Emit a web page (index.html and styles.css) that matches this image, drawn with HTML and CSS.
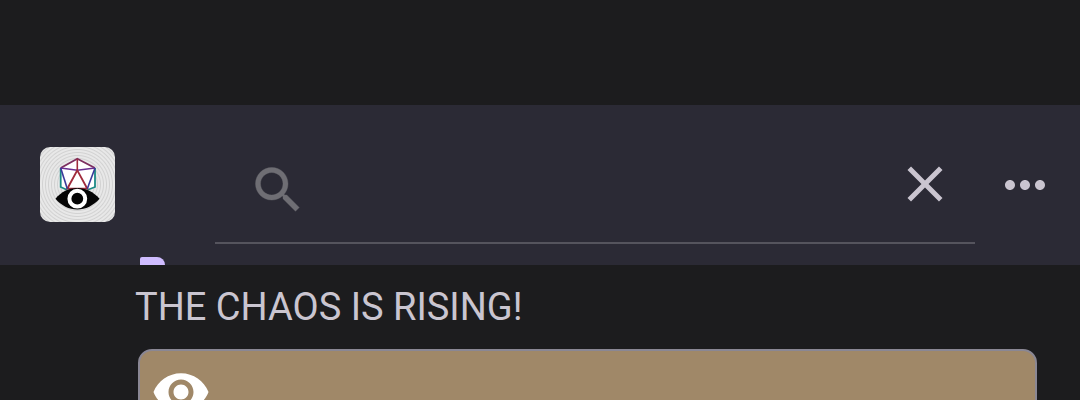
FILE: index.html
```html
<!DOCTYPE html>
<html lang="en">
<head>
    <meta charset="UTF-8">
    <meta name="viewport" content="width=device-width, initial-scale=1.0">
    <title>The Chaos Is Rising</title>
    <link rel="stylesheet" href="styles.css">
</head>
<body>
    <div class="status-bar"></div>
    <header class="app-bar">
        <div class="logo">
            <svg viewBox="0 0 75 75" width="75" height="75" fill="none">
                <polygon points="37.3,11.7 55,21 55,40 37.3,50 20.7,40 20.7,21" fill="#fff"/>
                <polyline points="20.7,21 37.3,11.7 55,21" stroke="#7d2f5f" stroke-width="1.8"/>
                <polyline points="20.7,21 20.7,40 27.3,43" stroke="#1b8a86" stroke-width="1.8"/>
                <polyline points="55,21 55,40 47.3,43" stroke="#1b8a86" stroke-width="1.8"/>
                <polyline points="20.7,21 37.3,23.3 55,21" stroke="#6a2f90" stroke-width="1.6"/>
                <line x1="37.3" y1="11.7" x2="37.3" y2="23.3" stroke="#a02c3c" stroke-width="1.6"/>
                <polygon points="37.3,23.3 27.3,41.7 47.3,41.7" stroke="#a02c3c" stroke-width="1.8"/>
                <line x1="20.7" y1="21" x2="27.3" y2="41.7" stroke="#3b3a9a" stroke-width="1.6"/>
                <line x1="55" y1="21" x2="47.3" y2="41.7" stroke="#3b3a9a" stroke-width="1.6"/>
                <path d="M15.5 51.7C21 45 29 41 37.3 41S53.6 45 59.5 51.7C53.6 58.4 45.6 62.5 37.3 62.5S21 58.4 15.5 51.7Z" fill="#050505"/>
                <circle cx="37.3" cy="51.7" r="7.9" stroke="#fff" stroke-width="4"/>
            </svg>
        </div>
        <div class="search">
            <svg class="icon search-icon" viewBox="0 0 24 24" width="60" height="60">
                <path d="M15.5 14h-.79l-.28-.27C15.41 12.59 16 11.11 16 9.5 16 5.91 13.09 3 9.5 3S3 5.91 3 9.5 5.91 16 9.5 16c1.61 0 3.09-.59 4.23-1.57l.27.28v.79l5 4.99L20.49 19l-4.99-5zm-6 0C7.01 14 5 11.99 5 9.5S7.01 5 9.5 5 14 7.01 14 9.5 11.99 14 9.5 14z"/>
            </svg>
            <input class="search-input" type="text" aria-label="Search">
            <svg class="icon" viewBox="0 0 24 24" width="60" height="60">
                <path d="M19 6.41L17.59 5 12 10.59 6.41 5 5 6.41 10.59 12 5 17.59 6.41 19 12 13.41 17.59 19 19 17.59 13.41 12z"/>
            </svg>
        </div>
        <svg class="icon more" viewBox="0 0 24 24" width="60" height="60">
            <path d="M6 10c-1.1 0-2 .9-2 2s.9 2 2 2 2-.9 2-2-.9-2-2-2zm12 0c-1.1 0-2 .9-2 2s.9 2 2 2 2-.9 2-2-.9-2-2-2zm-6 0c-1.1 0-2 .9-2 2s.9 2 2 2 2-.9 2-2-.9-2-2-2z"/>
        </svg>
        <span class="tab-peek"></span>
    </header>
    <main class="content">
        <h1 class="post-title">THE CHAOS IS RISING!</h1>
        <div class="card">
            <svg class="card-eye" viewBox="0 0 24 24" width="60" height="60">
                <path d="M12 4.5C7 4.5 2.73 7.61 1 12c1.73 4.39 6 7.5 11 7.5s9.27-3.11 11-7.5c-1.73-4.39-6-7.5-11-7.5zM12 17c-2.76 0-5-2.24-5-5s2.24-5 5-5 5 2.24 5 5-2.24 5-5 5zm0-8c-1.66 0-3 1.34-3 3s1.34 3 3 3 3-1.34 3-3-1.34-3-3-3z"/>
            </svg>
        </div>
    </main>
</body>
</html>
```

FILE: styles.css
```css
body {
    margin: 0;
    height: 400px;
    overflow: hidden;
    background: #1c1c1e;
    font-family: Roboto, sans-serif;
}
.status-bar {
    height: 105px;
}
.app-bar {
    position: relative;
    display: flex;
    align-items: flex-start;
    box-sizing: border-box;
    height: 160px;
    padding: 42px 0 0 40px;
    background: #2b2a35;
}
.logo {
    width: 75px;
    height: 75px;
    margin-right: 100px;
    border-radius: 10px;
    overflow: hidden;
    background: repeating-radial-gradient(circle at 50% 50%, #e8e8e8 0, #e8e8e8 1px, #d2d2d2 2px, #e8e8e8 3px);
}
.search {
    display: flex;
    align-items: flex-start;
    box-sizing: border-box;
    width: 760px;
    height: 90px;
    margin-top: 7px;
    padding: 0 20px 0 33px;
    border-bottom: 2px solid #55545d;
}
.search-input {
    flex: 1;
    min-width: 0;
    height: 60px;
    padding: 0;
    border: none;
    outline: none;
    background: transparent;
    color: #cac5d0;
    font-size: 32px;
}
.icon {
    flex-shrink: 0;
    fill: #cac5d0;
}
.search-icon {
    margin-top: 6px;
    fill: #6f6e74;
    stroke: #6f6e74;
    stroke-width: 0.15;
}
.more {
    margin: 8px 0 0 20px;
}
.tab-peek {
    position: absolute;
    left: 140px;
    bottom: 0;
    width: 25px;
    height: 8px;
    border-radius: 2px 8px 0 0;
    background: #cfbcff;
}
.content {
    padding: 21px 43px 0 135px;
}
.post-title {
    margin: 0 0 21px;
    color: #cac5d0;
    font-size: 38px;
    font-weight: 400;
    line-height: 42px;
}
.card {
    box-sizing: border-box;
    height: 200px;
    margin-left: 3px;
    padding: 11px 0 0 11px;
    border: 2px solid #8a8794;
    border-radius: 14px;
    background: #a08868;
}
.card-eye {
    display: block;
    fill: #fff;
}
```
